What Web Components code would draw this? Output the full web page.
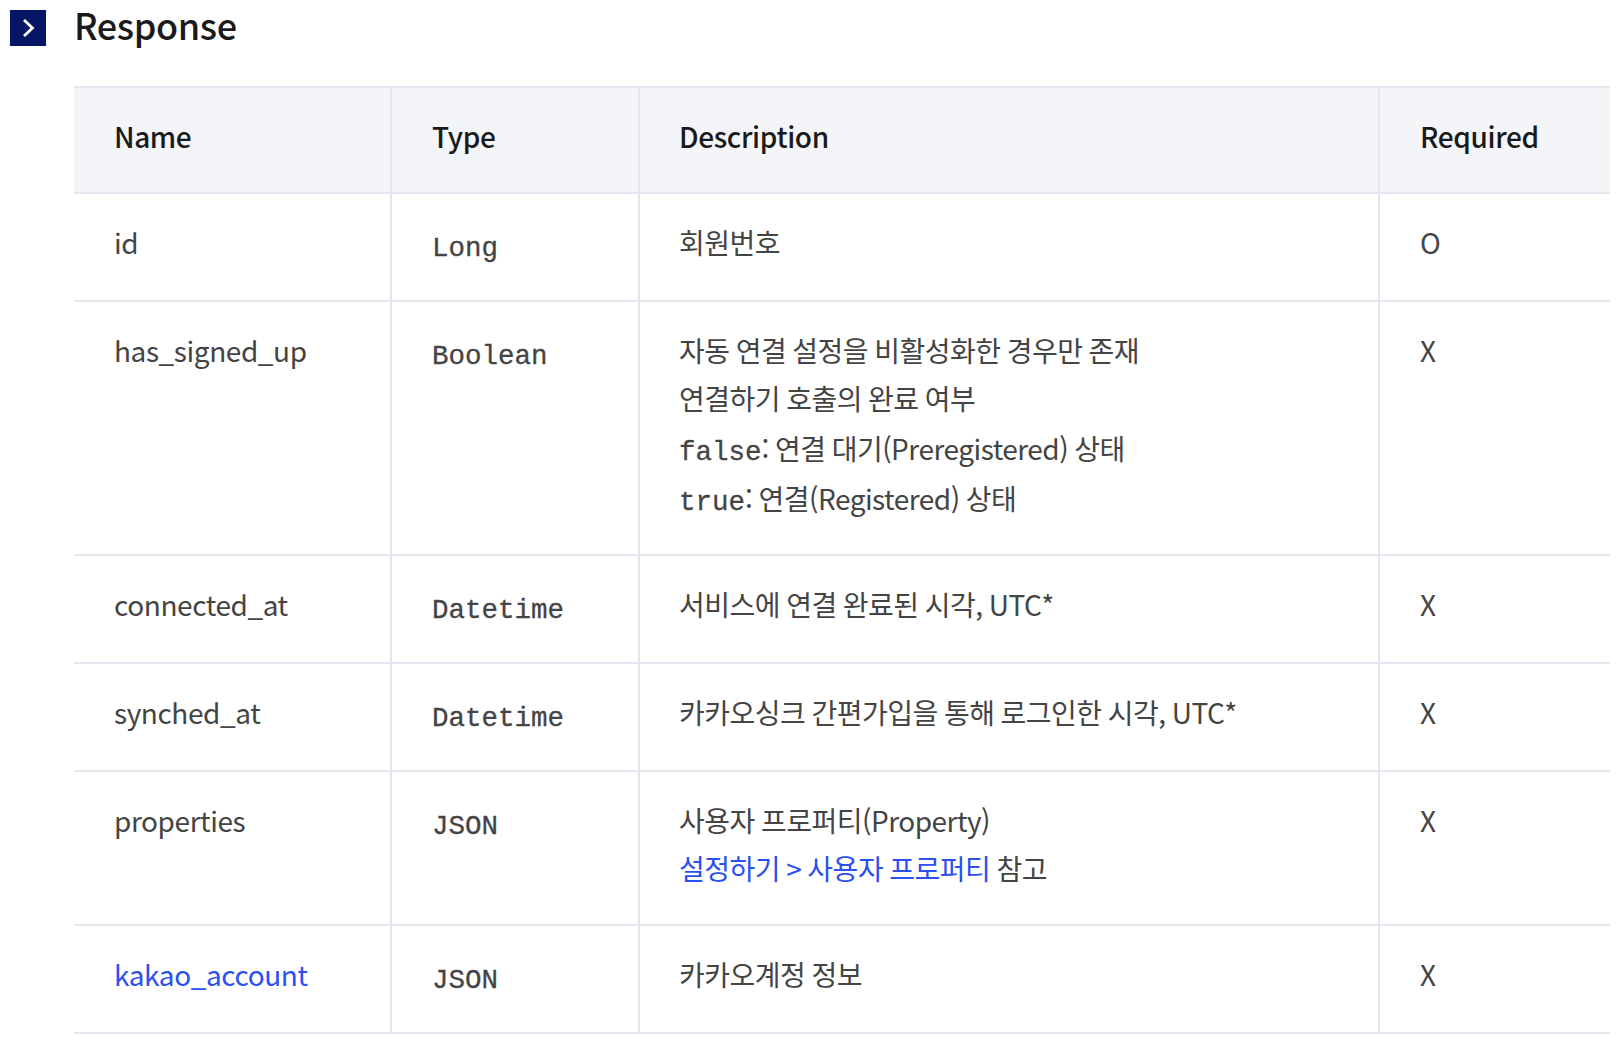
<!DOCTYPE html>
<html lang="ko">
<head>
<meta charset="utf-8">
<title>Response</title>
<style>
    html, body { margin: 0; background: #fff; overflow: hidden; }
    body { font-family: "Noto Sans CJK KR", "Noto Sans", sans-serif; }
    a { color: #2b4ff0; text-decoration: none; }
    code {
        font-family: "Liberation Mono", monospace;
        font-size: 27.5px;
        line-height: 42px;
        letter-spacing: 0;
        -webkit-text-stroke: 0.3px #444;
    }
</style>
</head>
<body>
<api-section heading="Response">
    <param-table>
        <param-row head>
            <span slot="name">Name</span>
            <span slot="type">Type</span>
            <span slot="desc">Description</span>
            <span slot="req">Required</span>
        </param-row>
        <param-row>
            <span slot="name">id</span>
            <code slot="type">Long</code>
            <span slot="desc">회원번호</span>
            <span slot="req">O</span>
        </param-row>
        <param-row>
            <span slot="name">has_signed_up</span>
            <code slot="type">Boolean</code>
            <div slot="desc">
                <desc-line>자동 연결 설정을 비활성화한 경우만 존재</desc-line>
                <desc-line>연결하기 호출의 완료 여부</desc-line>
                <desc-line code><code>false</code>: 연결 대기(Preregistered) 상태</desc-line>
                <desc-line code><code>true</code>: 연결(Registered) 상태</desc-line>
            </div>
            <span slot="req">X</span>
        </param-row>
        <param-row>
            <span slot="name">connected_at</span>
            <code slot="type">Datetime</code>
            <span slot="desc">서비스에 연결 완료된 시각, UTC*</span>
            <span slot="req">X</span>
        </param-row>
        <param-row>
            <span slot="name">synched_at</span>
            <code slot="type">Datetime</code>
            <span slot="desc">카카오싱크 간편가입을 통해 로그인한 시각, UTC*</span>
            <span slot="req">X</span>
        </param-row>
        <param-row>
            <span slot="name">properties</span>
            <code slot="type">JSON</code>
            <div slot="desc">
                <desc-line>사용자 프로퍼티(Property)</desc-line>
                <desc-line><a href="#">설정하기 &gt; 사용자 프로퍼티</a> 참고</desc-line>
            </div>
            <span slot="req">X</span>
        </param-row>
        <param-row>
            <a slot="name" href="#">kakao_account</a>
            <code slot="type">JSON</code>
            <span slot="desc">카카오계정 정보</span>
            <span slot="req">X</span>
        </param-row>
    </param-table>
</api-section>

<script>
// Section heading with the square arrow mark
class ApiSection extends HTMLElement {
    constructor() {
        super();
        this.attachShadow({ mode: 'open' });
    }

    connectedCallback() {
        this.shadowRoot.innerHTML = `
            <style>
                :host { display: block; padding: 10px 14px 0 10px; }
                header {
                    display: flex;
                    align-items: flex-start;
                    gap: 28px;
                    height: 76px;
                }
                .mark {
                    width: 36px;
                    height: 36px;
                    background: #061566;
                    display: flex;
                    align-items: center;
                    justify-content: center;
                    flex: none;
                }
                h2 {
                    margin: -14px 0 0;
                    font-size: 36px;
                    line-height: 56px;
                    font-weight: 500;
                    letter-spacing: -0.4px;
                    color: #1a1a1a;
                }
                .body { padding-left: 64px; }
            </style>
            <header>
                <span class="mark">
                    <svg width="14" height="20" viewBox="0 0 14 20">
                        <path d="M3 2 L11.5 10 L3 18" fill="none" stroke="#fff" stroke-width="2.8"/>
                    </svg>
                </span>
                <h2>${this.getAttribute('heading')}</h2>
            </header>
            <div class="body"><slot></slot></div>
        `;
    }
}

class ParamTable extends HTMLElement {
    constructor() {
        super();
        this.attachShadow({ mode: 'open' });
        this.shadowRoot.innerHTML = `
            <style>
                :host {
                    display: block;
                    border-top: 2px solid #e2e4ee;
                    font-size: 28px;
                    letter-spacing: -0.5px;
                    word-spacing: -1.2px;
                    color: #444;
                }
            </style>
            <slot></slot>
        `;
    }
}

// One table row, cells come in by named slots
class ParamRow extends HTMLElement {
    constructor() {
        super();
        this.attachShadow({ mode: 'open' });
        this.shadowRoot.innerHTML = `
            <style>
                :host {
                    display: grid;
                    grid-template-columns: 316px 248px 740px 1fr;
                    border-bottom: 2px solid #e2e4ee;
                    line-height: 48px;
                }
                :host([head]) {
                    background: #f4f5f9;
                    font-weight: 500;
                    color: #1a1a1a;
                    letter-spacing: -0.35px;
                }
                .cell {
                    padding: 24px 40px 32px;
                    border-left: 2px solid #e2e4ee;
                }
                .cell.first { border-left: 0; letter-spacing: -0.42px; }
                .cell.type { padding: 26px 40px 30px; }
                .cell.desc { padding-left: 39px; }
                :host([head]) .cell { padding-top: 24px; padding-bottom: 32px; }
            </style>
            <div class="cell first"><slot name="name"></slot></div>
            <div class="cell type"><slot name="type"></slot></div>
            <div class="cell desc"><slot name="desc"></slot></div>
            <div class="cell"><slot name="req"></slot></div>
        `;
    }
}

class DescLine extends HTMLElement {
    constructor() {
        super();
        this.attachShadow({ mode: 'open' });
        this.shadowRoot.innerHTML = `
            <style>
                :host { display: block; }
                :host([code]) { box-sizing: border-box; height: 50px; padding-top: 2px; }
            </style>
            <slot></slot>
        `;
    }
}

customElements.define('api-section', ApiSection);
customElements.define('param-table', ParamTable);
customElements.define('param-row', ParamRow);
customElements.define('desc-line', DescLine);
</script>
</body>
</html>
